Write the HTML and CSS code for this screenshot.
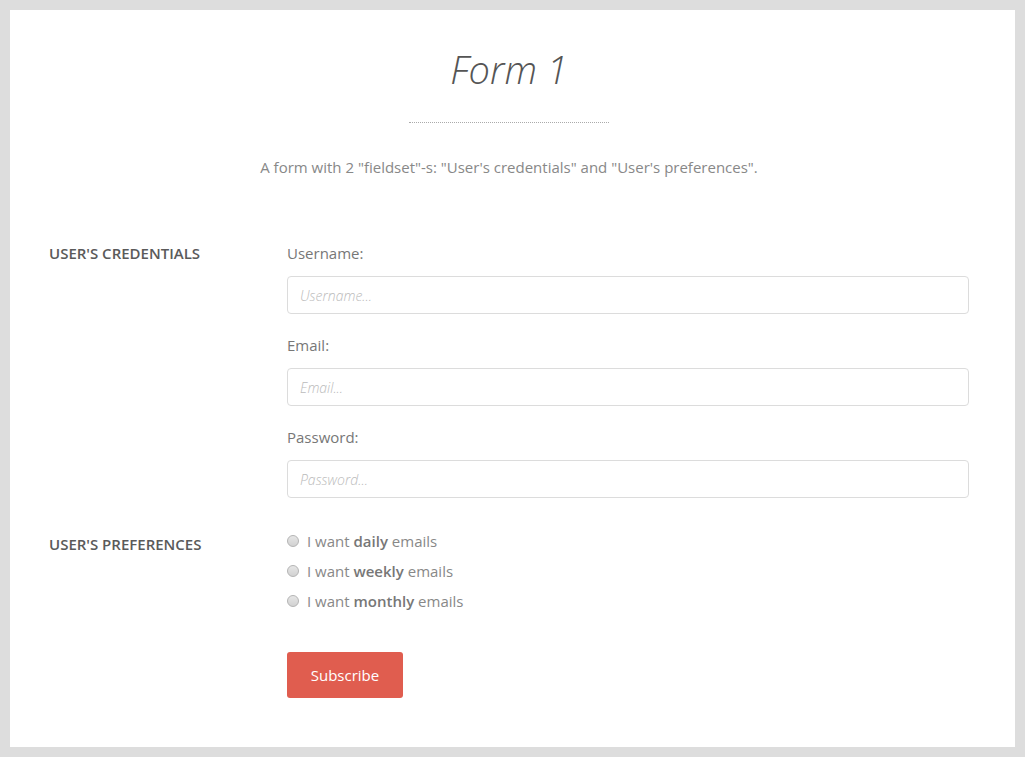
FILE: index.html
```html
<!DOCTYPE html>
<html lang="en">
<head>
    <meta charset="UTF-8">
    <meta name="viewport" content="width=device-width, initial-scale=1.0">
    <title>Form 1</title>
    <link rel="stylesheet" href="styles.css">
</head>
<body>

    <div class="page">
        <h1>Form 1</h1>
        <div class="divider"></div>
        <p class="intro">A form with 2 "fieldset"-s: "User's credentials" and "User's preferences".</p>

        <form class="form">
            <fieldset class="credentials">
                <legend>User's credentials</legend>
                <div class="fields">
                    <label for="username">Username:</label>
                    <input type="text" id="username" placeholder="Username...">

                    <label for="email">Email:</label>
                    <input type="email" id="email" placeholder="Email...">

                    <label for="password">Password:</label>
                    <input type="password" id="password" placeholder="Password...">
                </div>
            </fieldset>

            <fieldset class="preferences">
                <legend>User's preferences</legend>
                <div class="fields">
                    <label class="radio"><input type="radio" name="freq"><span>I want <b>daily</b> emails</span></label>
                    <label class="radio"><input type="radio" name="freq"><span>I want <b>weekly</b> emails</span></label>
                    <label class="radio"><input type="radio" name="freq"><span>I want <b>monthly</b> emails</span></label>

                    <button type="button" class="subscribe">Subscribe</button>
                </div>
            </fieldset>
        </form>
    </div>

</body>
</html>
```

FILE: styles.css
```css
body {
    margin: 0;
    padding: 10px;
    background: #dddddd;
    font-family: "Open Sans", Arial, sans-serif;
    color: #888;
}

.page {
    background: #fff;
    height: 737px;
    box-sizing: border-box;
    padding: 35px 46px 0 39px;
}

.page h1 {
    margin: 0;
    text-align: center;
    font-size: 38px;
    line-height: 48px;
    font-weight: 300;
    font-style: italic;
    color: #555;
}

.divider {
    width: 200px;
    margin: 29px auto 0;
    border-top: 1px dotted #aaa;
}

.intro {
    margin: 33px 0 0;
    text-align: center;
    font-size: 15px;
    line-height: 22px;
}

.form {
    margin-top: 64px;
}

fieldset {
    border: none;
    margin: 0;
    padding: 0;
    display: flex;
}

legend {
    float: left;
    width: 238px;
    padding: 0;
    font-size: 15px;
    line-height: 22px;
    font-weight: 600;
    text-transform: uppercase;
    color: #5a5a5a;
}

.fields {
    flex: 1;
    display: flex;
    flex-direction: column;
}

.fields label {
    font-size: 15px;
    line-height: 22px;
    color: #777;
}

.fields input[type="text"],
.fields input[type="email"],
.fields input[type="password"] {
    height: 38px;
    box-sizing: border-box;
    margin: 12px 0 20px;
    padding: 0 12px;
    border: 1px solid #dcdcdc;
    border-radius: 4px;
    font-family: "Open Sans", Arial, sans-serif;
    font-size: 14px;
    color: #666;
    outline: none;
}

.fields input::placeholder {
    color: #bbb;
    font-style: italic;
    font-weight: 300;
}

.preferences {
    margin-top: 8px;
}

.preferences legend {
    padding-top: 7px;
}

.radio {
    display: flex;
    align-items: center;
    height: 30px;
    color: #888 !important;
}

.radio b {
    font-weight: 600;
    color: #777;
}

.radio input {
    appearance: none;
    -webkit-appearance: none;
    width: 12px;
    height: 12px;
    margin: 0 8px 0 0;
    border: 1px solid #b4b4b4;
    border-radius: 50%;
    background: linear-gradient(#e6e6e6, #d2d2d2);
    box-sizing: border-box;
}

.subscribe {
    align-self: flex-start;
    margin-top: 36px;
    width: 116px;
    height: 46px;
    background: #e05d4f;
    color: #fff;
    border: none;
    border-radius: 3px;
    font-family: "Open Sans", Arial, sans-serif;
    font-size: 15px;
    cursor: pointer;
}
```
